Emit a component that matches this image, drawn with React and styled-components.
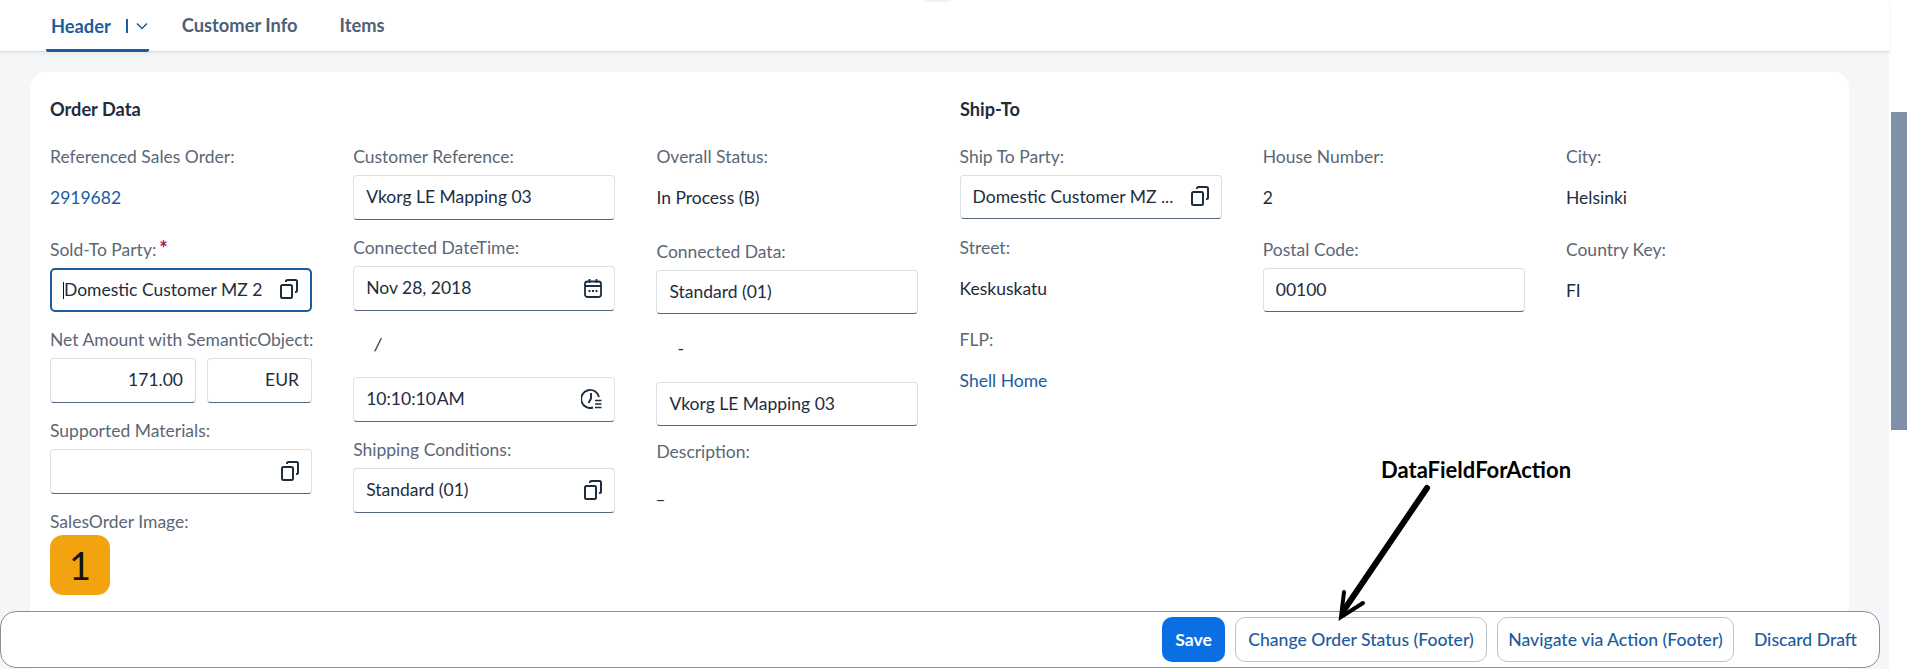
import React from "react"
import styled, { createGlobalStyle } from "styled-components"

const GlobalStyle = createGlobalStyle`
  html, body {
    margin: 0;
    height: 100%;
    overflow: hidden;
    background: #ffffff;
  }
  body {
    font-family: "Lato", "Open Sans", sans-serif;
    font-size: 17.5px;
    color: #1d2d3e;
  }
`

const Page = styled.div`
  position: relative;
  width: 1907px;
  height: 669px;
  overflow: hidden;
  background: #ffffff;
`

const Content = styled.div`
  width: 1889px;
  height: 669px;
  background: #f5f6f7;
`

const TopNub = styled.div`
  position: absolute;
  left: 925px;
  top: 0;
  width: 26px;
  height: 2px;
  background: #f3f3f3;
  border-radius: 0 0 8px 8px;
`

const TabBar = styled.div`
  display: flex;
  align-items: stretch;
  height: 52px;
  padding-left: 46px;
  box-sizing: border-box;
  background: #ffffff;
  border-bottom: 1px solid #dcdcdc;
  box-shadow: 0 1px 4px rgba(0, 0, 0, 0.08);
`

const Tab = styled.div`
  display: flex;
  align-items: center;
  gap: 15px;
  padding: ${({ $active }) => ($active ? "3px 1px 0 5px" : "0 5px 2px")};
  margin-right: ${({ $gap }) => $gap}px;
  height: 52px;
  box-sizing: border-box;
  font-weight: 700;
  font-size: 18.3px;
  color: ${({ $active }) => ($active ? "#1b5c9f" : "#4d6076")};
  border-bottom: ${({ $active }) => ($active ? "3px solid #1b5c9f" : "none")};
  border-radius: 0 0 2px 2px;
`

const Card = styled.div`
  margin: 20px 40px 0 30px;
  height: 640px;
  padding: 26px 20px 0;
  background: #ffffff;
  border-radius: 16px;
  box-sizing: border-box;
`

const Headings = styled.div`
  display: flex;
  height: 22px;
  margin-bottom: 27px;
`

const Heading = styled.h3`
  margin: 0;
  width: ${({ $width }) => $width}px;
  font-size: 18.2px;
  line-height: 22px;
  font-weight: 700;
  color: #1d2d3e;
`

const Columns = styled.div`
  display: grid;
  grid-template-columns: repeat(6, 262px);
  column-gap: 41.2px;
`

const Column = styled.div`
  display: flex;
  flex-direction: column;
`

const Field = styled.div`
  display: flex;
  flex-direction: column;
  margin-top: ${({ $top }) => $top || 0}px;
`

const Label = styled.div`
  height: 20px;
  line-height: 20px;
  margin-bottom: 8px;
  color: #5b6775;
  white-space: nowrap;
`

const Required = styled.span`
  margin-left: 3px;
  font-size: 20px;
  line-height: 0;
  font-weight: 700;
  color: #a0115e;
`

const Value = styled.div`
  display: flex;
  align-items: center;
  height: 44px;
  color: #1d2d3e;
`

const Link = styled(Value)`
  color: #1b5c9f;
`

const Separator = styled.div`
  display: flex;
  align-items: center;
  height: ${({ $height }) => $height}px;
  padding-left: ${({ $indent }) => $indent}px;
  font-style: ${({ $italic }) => ($italic ? "italic" : "normal")};
`

const Input = styled.div`
  position: relative;
  display: flex;
  align-items: center;
  flex: ${({ $flex }) => $flex || "none"};
  height: ${({ $height }) => $height || 45}px;
  padding: 0 12px 2px;
  box-sizing: border-box;
  background: #ffffff;
  border: ${({ $focus }) => ($focus ? "2px solid #1b5c9f" : "1px solid #dcdfe3")};
  border-bottom: ${({ $focus }) => ($focus ? "2px solid #1b5c9f" : "1px solid #56677a")};
  border-radius: ${({ $focus }) => ($focus ? "5px" : "4px")};
  color: #1d2d3e;
  white-space: nowrap;
`

const InputText = styled.span`
  flex: 1;
  overflow: hidden;
  text-align: ${({ $right }) => ($right ? "right" : "left")};
  word-spacing: ${({ $tight }) => ($tight ? "-3px" : "normal")};
`

const Caret = styled.i`
  position: absolute;
  left: 11px;
  top: 12px;
  width: 1px;
  height: 17px;
  background: #111111;
`

const InputPair = styled.div`
  display: flex;
  gap: 11px;
`

const Avatar = styled.div`
  display: flex;
  align-items: center;
  justify-content: center;
  width: 60px;
  height: 60px;
  margin-top: -5px;
  background: #f2a30f;
  border-radius: 13px;
  font-size: 38px;
  color: #141414;
`

const Footer = styled.div`
  position: absolute;
  left: 0;
  top: 611px;
  width: 1880px;
  height: 57px;
  box-sizing: border-box;
  display: flex;
  align-items: center;
  justify-content: flex-end;
  gap: 10px;
  padding-right: 22px;
  background: #ffffff;
  border: 1px solid #8a9099;
  border-radius: 16px;
`

const Button = styled.button`
  width: ${({ $width }) => $width}px;
  height: 45px;
  padding: 0;
  font-family: inherit;
  font-size: 17.6px;
  font-weight: ${({ $primary }) => ($primary ? 700 : 500)};
  white-space: nowrap;
  text-align: ${({ $ghost }) => ($ghost ? "right" : "center")};
  color: ${({ $primary }) => ($primary ? "#ffffff" : "#1b5c9f")};
  background: ${({ $primary }) => ($primary ? "#0a6fe3" : "#ffffff")};
  border: ${({ $primary, $ghost }) => ($primary || $ghost ? "none" : "1px solid #bcc3ca")};
  border-radius: 10px;
`

const Scrollbar = styled.div`
  position: absolute;
  left: 1891px;
  top: 112px;
  width: 16px;
  height: 318px;
  background: #7f90a8;
`

const Note = styled.div`
  position: absolute;
  left: 1381px;
  top: 457px;
  font-family: "Lato", sans-serif;
  font-size: 22px;
  line-height: 26px;
  font-weight: 700;
  color: #000000;
`

const ArrowSvg = styled.svg`
  position: absolute;
  left: 1330px;
  top: 480px;
`

const IconSlot = styled.svg`
  flex: none;
  color: #1d2d3e;
`

const CopyIcon = () => (
  <IconSlot width="18" height="20" viewBox="0 0 18 20" fill="none" stroke="currentColor" strokeWidth="2">
    <rect x="1" y="6" width="11" height="13" rx="1.5" />
    <path d="M6 3V2.5A1.5 1.5 0 0 1 7.500 1H15.500A1.500 1.500 0 0 1 17 2.500V11.500A1.500 1.500 0 0 1 15.500 13H15" />
  </IconSlot>
)

const CalendarIcon = () => (
  <IconSlot width="18" height="20" viewBox="0 0 18 20" fill="none" stroke="currentColor" strokeWidth="1.8">
    <rect x="1" y="3.500" width="16" height="15.500" rx="2.500" />
    <path d="M1 8h16M5.500 1v4M12.500 1v4" />
    <path d="M4.500 13h2M8 13h2M11.500 13h2" strokeWidth="2.200" />
  </IconSlot>
)

const TimeIcon = () => (
  <IconSlot width="21" height="22" viewBox="0 0 21 22" fill="none" stroke="currentColor" strokeWidth="1.900">
    <path d="M12 19.500A9 9 0 1 1 18 9" />
    <path d="M10 5v5.500L7.500 15" />
    <path d="M14 12.500h6.500M14 16h6.500M14 19.500h6.500" strokeWidth="1.700" />
  </IconSlot>
)

const Chevron = () => (
  <svg width="12" height="8" viewBox="0 0 12 8" fill="none" stroke="#1b5c9f" strokeWidth="1.500">
    <path d="M1 1.500l5 5 5-5" />
  </svg>
)

const TabDivider = styled.span`
  width: 2px;
  height: 14px;
  margin-right: -7px;
  background: #1b5c9f;
`

export default function App() {
  return (
    <Page>
      <GlobalStyle />
      <Content>
        <TabBar>
          <Tab $active $gap={28}>
            Header
            <TabDivider />
            <Chevron />
          </Tab>
          <Tab $gap={32}>Customer Info</Tab>
          <Tab>Items</Tab>
        </TabBar>
        <Card>
          <Headings>
            <Heading $width={910}>Order Data</Heading>
            <Heading>Ship-To</Heading>
          </Headings>
          <Columns>
            <Column>
              <Field>
                <Label>Referenced Sales Order:</Label>
                <Link>2919682</Link>
              </Field>
              <Field $top={21}>
                <Label>
                  Sold-To Party:<Required>*</Required>
                </Label>
                <Input $focus $height={44}>
                  <Caret />
                  <InputText>Domestic Customer MZ 2</InputText>
                  <CopyIcon />
                </Input>
              </Field>
              <Field $top={18}>
                <Label>Net Amount with SemanticObject:</Label>
                <InputPair>
                  <Input $flex="0 0 146px">
                    <InputText $right>171.00</InputText>
                  </Input>
                  <Input $flex="1">
                    <InputText $right>EUR</InputText>
                  </Input>
                </InputPair>
              </Field>
              <Field $top={18}>
                <Label>Supported Materials:</Label>
                <Input>
                  <InputText />
                  <CopyIcon />
                </Input>
              </Field>
              <Field $top={18}>
                <Label>SalesOrder Image:</Label>
                <Avatar>1</Avatar>
              </Field>
            </Column>
            <Column>
              <Field>
                <Label>Customer Reference:</Label>
                <Input>
                  <InputText>Vkorg LE Mapping 03</InputText>
                </Input>
              </Field>
              <Field $top={18}>
                <Label>Connected DateTime:</Label>
                <Input>
                  <InputText>Nov 28, 2018</InputText>
                  <CalendarIcon />
                </Input>
              </Field>
              <Separator $height={66} $indent={21} $italic>/</Separator>
              <Input>
                <InputText $tight>10:10:10 AM</InputText>
                <TimeIcon />
              </Input>
              <Field $top={18}>
                <Label>Shipping Conditions:</Label>
                <Input>
                  <InputText>Standard (01)</InputText>
                  <CopyIcon />
                </Input>
              </Field>
            </Column>
            <Column>
              <Field>
                <Label>Overall Status:</Label>
                <Value>In Process (B)</Value>
              </Field>
              <Field $top={23}>
                <Label>Connected Data:</Label>
                <Input $height={44}>
                  <InputText>Standard (01)</InputText>
                </Input>
              </Field>
              <Separator $height={68} $indent={21}>-</Separator>
              <Input $height={44}>
                <InputText>Vkorg LE Mapping 03</InputText>
              </Input>
              <Field $top={16}>
                <Label>Description:</Label>
                <Value>_</Value>
              </Field>
            </Column>
            <Column>
              <Field>
                <Label>Ship To Party:</Label>
                <Input $height={44}>
                  <InputText>Domestic Customer MZ ...</InputText>
                  <CopyIcon />
                </Input>
              </Field>
              <Field $top={19}>
                <Label>Street:</Label>
                <Value>Keskuskatu</Value>
              </Field>
              <Field $top={20}>
                <Label>FLP:</Label>
                <Link>Shell Home</Link>
              </Field>
            </Column>
            <Column>
              <Field>
                <Label>House Number:</Label>
                <Value>2</Value>
              </Field>
              <Field $top={21}>
                <Label>Postal Code:</Label>
                <Input $height={44}>
                  <InputText>00100</InputText>
                </Input>
              </Field>
            </Column>
            <Column>
              <Field>
                <Label>City:</Label>
                <Value>Helsinki</Value>
              </Field>
              <Field $top={21}>
                <Label>Country Key:</Label>
                <Value>FI</Value>
              </Field>
            </Column>
          </Columns>
        </Card>
      </Content>
      <TopNub />
      <Footer>
        <Button $primary $width={63}>Save</Button>
        <Button $width={252}>Change Order Status (Footer)</Button>
        <Button $width={237}>Navigate via Action (Footer)</Button>
        <Button $ghost $width={113}>Discard Draft</Button>
      </Footer>
      <Scrollbar />
      <Note>DataFieldForAction</Note>
      <ArrowSvg width="110" height="145" viewBox="0 0 110 145" fill="none" stroke="#000000" strokeLinecap="round">
        <path d="M97 8L14 130" strokeWidth="6" />
        <path d="M14 112L11 137L33 123" strokeWidth="4" />
      </ArrowSvg>
    </Page>
  )
}
